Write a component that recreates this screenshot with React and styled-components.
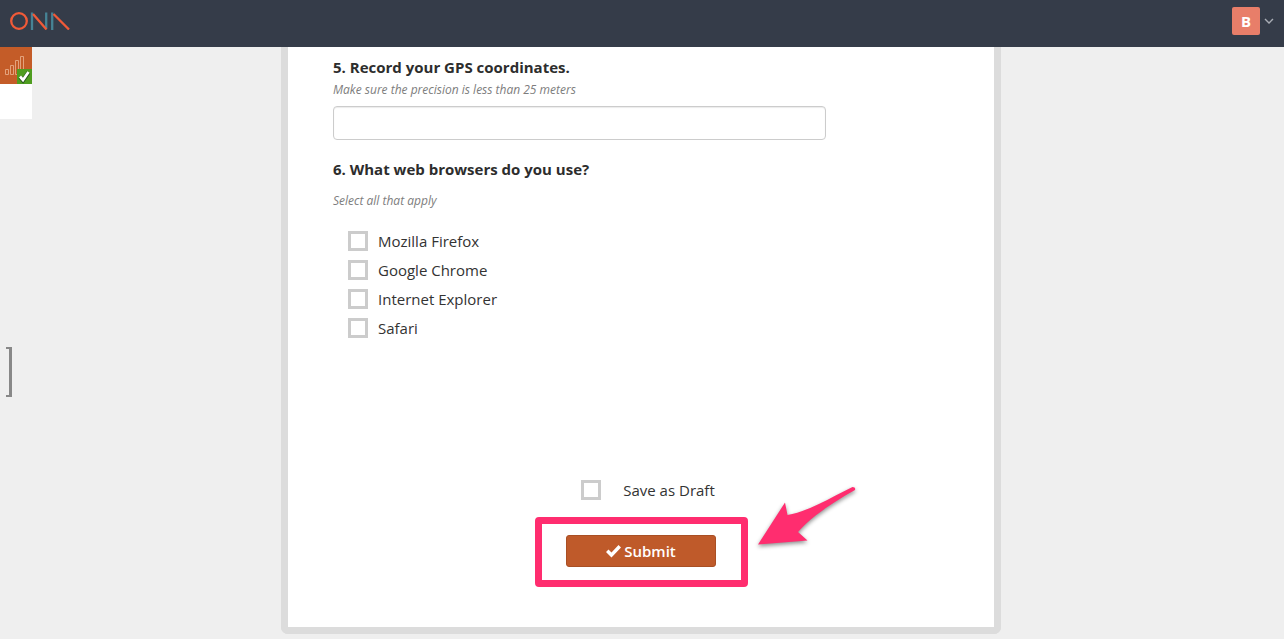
import React from "react";
import styled, { createGlobalStyle } from "styled-components";

const GlobalStyle = createGlobalStyle`
  *, *::before, *::after { box-sizing: border-box; }
  body {
    margin: 0;
    background: #efefef;
    color: #333;
    font: 15px/20px "Open Sans", sans-serif;
  }
  button, input { font: inherit; }
`;

const Header = styled.header`
  display: flex;
  align-items: center;
  justify-content: space-between;
  height: 47px;
  padding: 0 10px 5px 9px;
  background: #353c49;
`;

const LogoLink = styled.a`
  display: flex;
`;

const AccountButton = styled.button`
  display: flex;
  align-items: center;
  gap: 4px;
  padding: 0;
  border: 0;
  background: none;
  color: #a9adb5;
  cursor: pointer;
`;

const Avatar = styled.span`
  width: 28px;
  height: 28px;
  border-radius: 2px;
  background: #e87e69;
  color: #fff;
  font-weight: 700;
  line-height: 28px;
  text-align: center;
`;

const Body = styled.div`
  display: flex;
  align-items: flex-start;
`;

const Rail = styled.aside`
  flex: none;
  width: 32px;
`;

const QueueTile = styled.div`
  height: 37px;
  background: #c45c28;
`;

const QueueBlank = styled.div`
  height: 35px;
  margin-bottom: 228px;
  background: #fff;
`;

const Bracket = styled.button`
  display: block;
  width: 6px;
  height: 50px;
  margin-left: 6px;
  padding: 0;
  border: solid #888;
  border-width: 2px 3px 2px 0;
  background: none;
  cursor: pointer;
`;

const Main = styled.main`
  flex: 1;
  padding: 0 34px 5px 0;
`;

const Card = styled.form`
  max-width: 720px;
  margin: 0 auto;
  padding: 10px 45px 60px;
  border: 7px solid #dcdcdc;
  border-top: 0;
  border-radius: 0 0 7px 7px;
  background: #fff;
`;

const Question = styled.fieldset`
  min-width: 0;
  margin: 0 0 ${(p) => p.$space}px;
  padding: 0;
  border: 0;
`;

const Title = styled.span`
  display: block;
  color: #2d2d2d;
  font-weight: 700;
`;

const Legend = styled.legend`
  padding: 0;
`;

const Hint = styled.span`
  display: block;
  margin: ${(p) => p.$gap}px 0 0;
  color: #7d7d7d;
  font-size: 12px;
  font-style: italic;
`;

const TextInput = styled.input`
  display: block;
  width: 80%;
  height: 34px;
  margin-top: 6px;
  padding: 6px 12px;
  border: 1px solid #ccc;
  border-radius: 4px;
  background: #fff;
  box-shadow: inset 0 1px 1px rgba(0, 0, 0, 0.08);
`;

const Options = styled.div`
  display: grid;
  gap: 9px;
  margin-top: 20px;
  padding-left: 15px;
`;

const Option = styled.label`
  display: flex;
  align-items: center;
  gap: ${(p) => p.$gap || 10}px;
  cursor: pointer;
`;

const Checkbox = styled.input.attrs({ type: "checkbox" })`
  appearance: none;
  flex: none;
  width: 20px;
  height: 20px;
  margin: 0;
  border: 3px solid #ccc;
  background: #fff;
  &:checked { background: #888; }
`;

const Footer = styled.div`
  display: flex;
  flex-direction: column;
  align-items: center;
  gap: 35px;
`;

const DraftRow = styled.div`
  padding-left: 14px;
`;

const SubmitArea = styled.div`
  position: relative;
`;

const SubmitButton = styled.button`
  display: flex;
  align-items: center;
  justify-content: center;
  gap: 3px;
  width: 150px;
  height: 32px;
  padding: 0;
  border: 1px solid #a94f24;
  border-radius: 3px;
  background: #bf5a2a;
  color: #fff;
  font-weight: 600;
  cursor: pointer;
`;

const Highlight = styled.div`
  position: absolute;
  inset: -18px -32px -20px -31px;
  border: 7px solid #ff2d6f;
  border-radius: 4px;
  pointer-events: none;
`;

const Arrow = styled.svg`
  position: absolute;
  left: 184px;
  top: -55px;
  filter: drop-shadow(0 2px 2px rgba(0, 0, 0, 0.45));
  pointer-events: none;
`;

const OnaLogo = () => (
  <svg width="62" height="18" viewBox="0 2 62 18" fill="none" strokeWidth="2.300" aria-hidden="true">
    <g stroke="#468395">
      <path d="M23 2.500v17.500M37.200 2.500v16M43.200 2.500v17.500" />
    </g>
    <g stroke="#f15a38">
      <circle cx="10" cy="11" r="7.800" />
      <path d="M24 4l13.500 15.500M44.500 4l15.500 15.500" />
    </g>
  </svg>
);

const QueueIcon = () => (
  <svg width="32" height="37" viewBox="0 0 32 37" fill="none" aria-hidden="true">
    <path
      d="M5.500 22.500h3v5h-3zM10.500 18.500h3v9h-3zM15.500 13.500h3v14h-3zM20.500 9.500h3v18h-3z"
      stroke="#e3a27c"
    />
    <path d="M17 22h15v15H17z" fill="#4f9d20" />
    <path d="M20 30l3 3.500 5.500-8" stroke="#25531a" strokeWidth="4" />
    <path d="M20 29.500l3 3.500 5.500-8" stroke="#fff" strokeWidth="2.700" />
  </svg>
);

const BROWSERS = ["Mozilla Firefox", "Google Chrome", "Internet Explorer", "Safari"];

export default function App() {
  return (
    <>
      <GlobalStyle />
      <Header>
        <LogoLink href="#" aria-label="Ona">
          <OnaLogo />
        </LogoLink>
        <AccountButton type="button" aria-label="Account menu">
          <Avatar>B</Avatar>
          <svg width="10" height="6" viewBox="0 0 10 6" fill="none" stroke="currentColor" strokeWidth="1.400">
            <path d="M1 1l4 4 4-4" />
          </svg>
        </AccountButton>
      </Header>
      <Body>
        <Rail>
          <QueueTile>
            <QueueIcon />
          </QueueTile>
          <QueueBlank />
          <Bracket type="button" aria-label="Toggle side panel" />
        </Rail>
        <Main>
          <Card onSubmit={(e) => e.preventDefault()}>
            <Question $space={19}>
              <label htmlFor="gps">
                <Title>5. Record your GPS coordinates.</Title>
                <Hint $gap={3}>Make sure the precision is less than 25 meters</Hint>
              </label>
              <TextInput id="gps" type="text" />
            </Question>
            <Question $space={142}>
              <Legend>
                <Title>6. What web browsers do you use?</Title>
              </Legend>
              <Hint $gap={12}>Select all that apply</Hint>
              <Options>
                {BROWSERS.map((name) => (
                  <Option key={name}>
                    <Checkbox name="browsers" value={name} />
                    {name}
                  </Option>
                ))}
              </Options>
            </Question>
            <Footer>
              <DraftRow>
                <Option $gap={22}>
                  <Checkbox name="draft" />
                  Save as Draft
                </Option>
              </DraftRow>
              <SubmitArea>
                <SubmitButton type="submit">
                  <svg width="15" height="13" viewBox="0 0 15 13" fill="#fff" aria-hidden="true">
                    <path d="M0 7l2.500-2.500L5.500 7.500 12.500 0 15 2.500 5.500 12.500z" />
                  </svg>
                  Submit
                </SubmitButton>
                <Highlight />
                <Arrow width="116" height="76" viewBox="0 0 116 76" fill="#ff2d6f" aria-hidden="true">
                  <path d="M8 64.500L35 22.500L37.500 35C57 32 80 18 102.500 7Q106 7 105 10C83 22 60 38 48 52L57.500 60.500Z" />
                </Arrow>
              </SubmitArea>
            </Footer>
          </Card>
        </Main>
      </Body>
    </>
  );
}
